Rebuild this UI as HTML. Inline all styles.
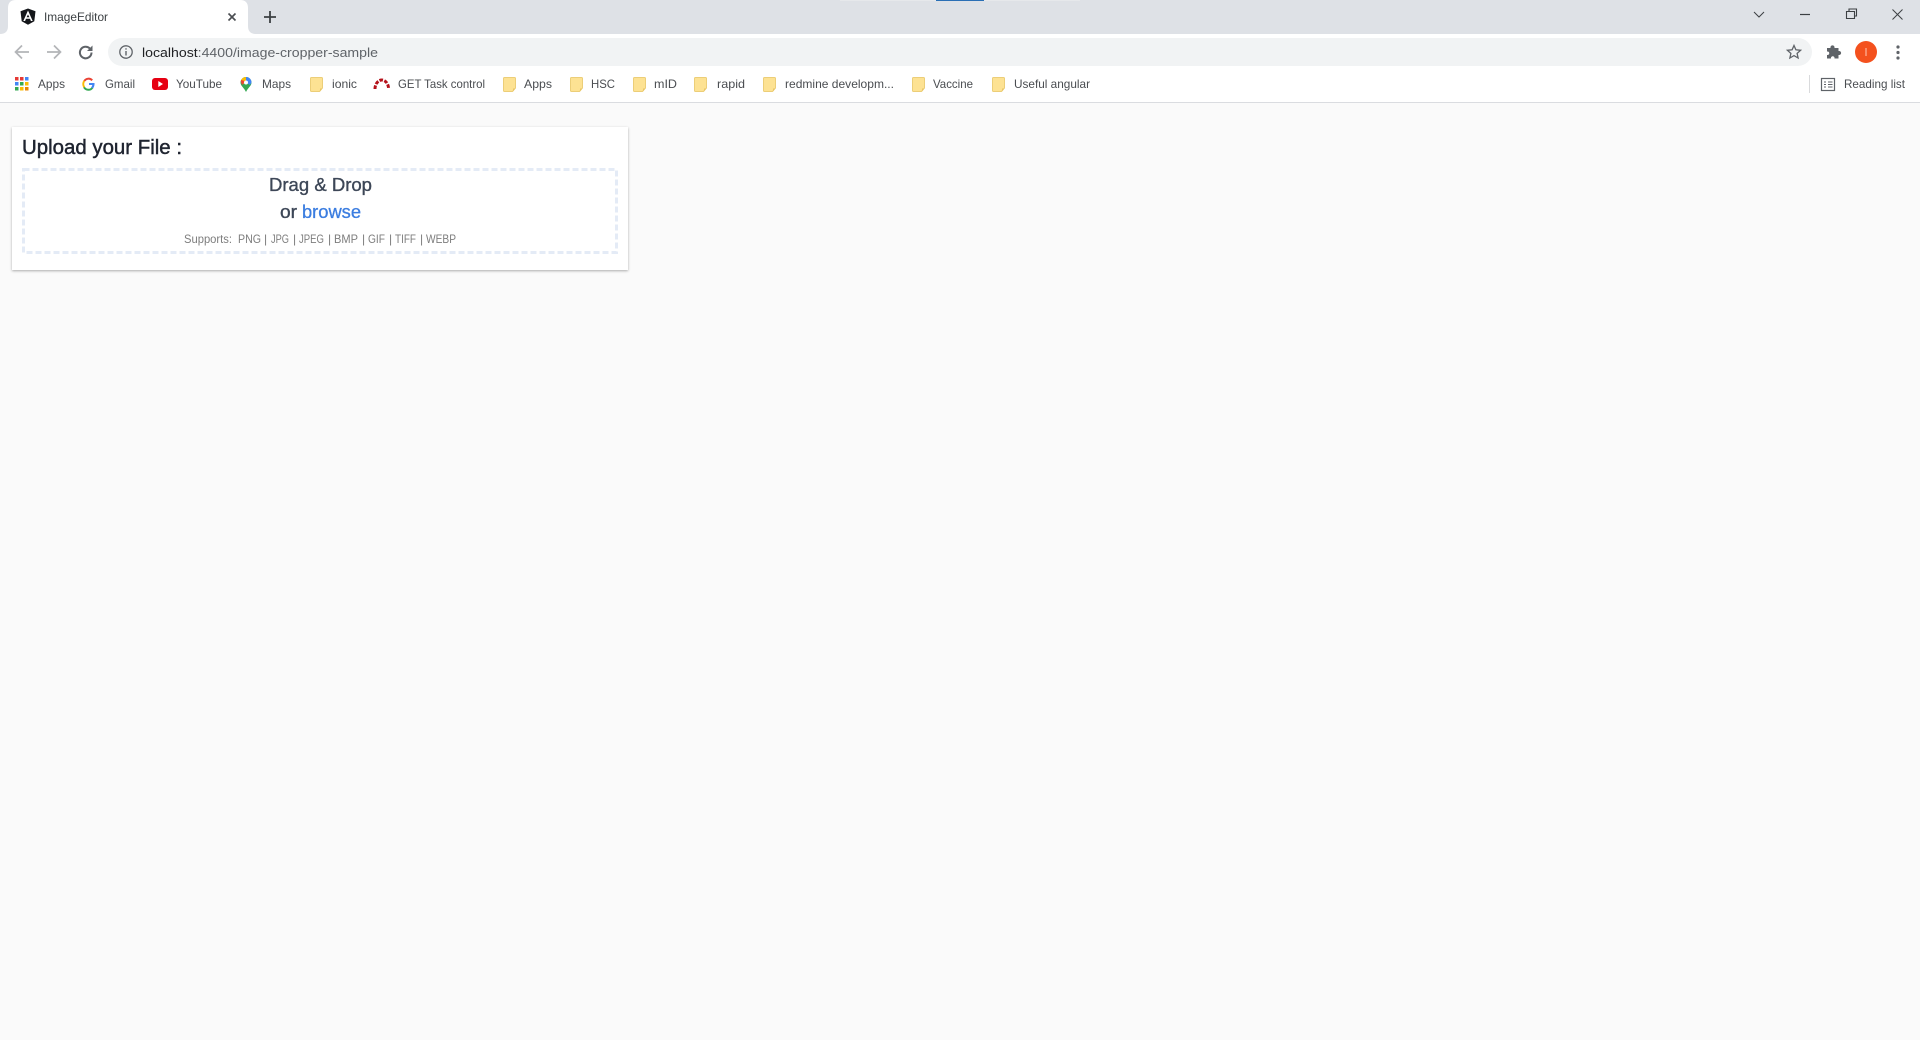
<!DOCTYPE html>
<html lang="en">
<head>
<meta charset="utf-8">
<title>ImageEditor</title>
<style>
html,body{margin:0;padding:0;background:#fafafa;width:1920px;height:1040px;overflow:hidden}
svg{display:block}
text{font-family:"Liberation Sans",sans-serif}
</style>
</head>
<body>
<svg xmlns="http://www.w3.org/2000/svg" width="1920" height="1040" viewBox="0 0 1920 1040">
<defs>
<filter id="sh" x="-5%" y="-10%" width="110%" height="125%">
<feDropShadow dx="0" dy="1" stdDeviation="1.4" flood-color="#000" flood-opacity=".32"/>
</filter>
<g id="folder">
<path d="M.5 1.500Q.5.5 1.500.5H11.500Q12.500.5 12.500 1.500V11L9.500 14.500H1.500Q.5 14.500 .5 13.500Z" fill="#fde293" stroke="#ecce78" stroke-width="1"/>
<path d="M12.500 11.500L10 14.500V11.500Z" fill="#e9c767"/>
</g>
</defs>

<!-- page -->
<rect width="1920" height="1040" fill="#fafafa"/>

<!-- tab strip -->
<rect width="1920" height="34" fill="#dee1e6"/>
<rect x="840" y="0" width="240" height="1" fill="#e6e8eb"/>
<rect x="936" y="0" width="48" height="1" fill="#2a6fb5"/>
<path d="M0 34Q8 34 8 26V8Q8 0 16 0H240Q248 0 248 8V26Q248 34 256 34Z" fill="#fff"/>

<!-- Angular favicon -->
<path d="M28 8.500L20.500 11.200 21.700 21.200 28 24.700 34.300 21.200 35.500 11.200Z" fill="#14161a"/>
<path d="M28 10.500L23.300 21H25.100L26 18.700H30L30.900 21H32.700ZM28 14.500L29.400 17.300H26.600Z" fill="#fff"/>
<text x="44" y="21" font-size="12" fill="#3c4043" textLength="64" lengthAdjust="spacingAndGlyphs">ImageEditor</text>
<path d="M228.500 13.500L235.500 20.500M235.500 13.500L228.500 20.500" stroke="#4a4d51" stroke-width="1.600" fill="none"/>
<path d="M270 11V23M264 17H276" stroke="#3c4043" stroke-width="1.800" fill="none"/>

<!-- window controls -->
<path d="M1754 12L1759 17L1764 12" stroke="#3c4043" stroke-width="1" fill="none"/>
<path d="M1800 14.500H1810" stroke="#3c4043" stroke-width="1.200"/>
<path d="M1846.500 11.500H1854.500V18.500H1846.500ZM1849 11V9H1856.500V16H1855" stroke="#3c4043" stroke-width="1.100" fill="none"/>
<path d="M1892.500 9.500L1902.500 19.500M1902.500 9.500L1892.500 19.500" stroke="#3c4043" stroke-width="1" fill="none"/>

<!-- toolbar -->
<rect x="0" y="34" width="1920" height="68" fill="#fff"/>
<path d="M29 52H16M22 45.500L15.500 52L22 58.500" stroke="#b3b5b8" stroke-width="1.700" fill="none"/>
<path d="M47 52H60.500M54 45.500L60.500 52L54 58.500" stroke="#b3b5b8" stroke-width="1.700" fill="none"/>
<path d="M91.500 52.500A5.800 5.800 0 1 1 89.800 48.400" stroke="#5f6368" stroke-width="2" fill="none"/>
<path d="M92.500 45.500V51H87Z" fill="#5f6368"/>

<rect x="108" y="38" width="1704" height="28" rx="14" fill="#f1f3f4"/>
<circle cx="126" cy="52" r="6.200" fill="none" stroke="#5f6368" stroke-width="1.300"/>
<path d="M126 51V55.500M126 48.200V49.600" stroke="#5f6368" stroke-width="1.400"/>
<text x="142" y="57" font-size="13" fill="#5f6368" textLength="236" lengthAdjust="spacingAndGlyphs"><tspan fill="#202124">localhost</tspan>:4400/image-cropper-sample</text>

<path d="M1794 45.500L1795.900 49.800 1800.600 50.300 1797.100 53.400 1798.100 58 1794 55.600 1789.900 58 1790.900 53.400 1787.400 50.300 1792.100 49.800Z" fill="none" stroke="#5f6368" stroke-width="1.300"/>
<path d="M1827 48H1830.500C1830 44.500 1835 44.500 1834.500 48H1838.500V51C1842 50.500 1842 55.500 1838.500 55V58.500H1834.500C1835 55.500 1830.500 55.500 1831 58.500H1827V55C1830 55.500 1830 51 1827 51.500Z" fill="#5f6368"/>
<circle cx="1866" cy="52" r="11" fill="#f4511e"/>
<path d="M1866 48V56" stroke="#ffc9b5" stroke-width="1"/>
<g fill="#5f6368"><circle cx="1898" cy="47" r="1.600"/><circle cx="1898" cy="52.500" r="1.600"/><circle cx="1898" cy="58" r="1.600"/></g>

<!-- bookmarks -->
<rect x="15" y="77" width="3.500" height="3.500" fill="#e53935"/>
<rect x="20" y="77" width="3.500" height="3.500" fill="#e53935"/>
<rect x="25" y="77" width="3.500" height="3.500" fill="#4285f4"/>
<rect x="15" y="82" width="3.500" height="3.500" fill="#4285f4"/>
<rect x="20" y="82" width="3.500" height="3.500" fill="#34a853"/>
<rect x="25" y="82" width="3.500" height="3.500" fill="#fbbc04"/>
<rect x="15" y="87" width="3.500" height="3.500" fill="#34a853"/>
<rect x="20" y="87" width="3.500" height="3.500" fill="#fbbc04"/>
<rect x="25" y="87" width="3.500" height="3.500" fill="#ea8600"/>
<g font-size="12" fill="#4a4d51">
<text x="38" y="88" textLength="27" lengthAdjust="spacingAndGlyphs">Apps</text>
<text x="105" y="88" textLength="30" lengthAdjust="spacingAndGlyphs">Gmail</text>
<text x="176" y="88" textLength="46" lengthAdjust="spacingAndGlyphs">YouTube</text>
<text x="262" y="88" textLength="29" lengthAdjust="spacingAndGlyphs">Maps</text>
<text x="332" y="88" textLength="25" lengthAdjust="spacingAndGlyphs">ionic</text>
<text x="398" y="88" textLength="87" lengthAdjust="spacingAndGlyphs">GET Task control</text>
<text x="524" y="88" textLength="28" lengthAdjust="spacingAndGlyphs">Apps</text>
<text x="591" y="88" textLength="24" lengthAdjust="spacingAndGlyphs">HSC</text>
<text x="654" y="88" textLength="23" lengthAdjust="spacingAndGlyphs">mID</text>
<text x="717" y="88" textLength="28" lengthAdjust="spacingAndGlyphs">rapid</text>
<text x="785" y="88" textLength="109" lengthAdjust="spacingAndGlyphs">redmine developm...</text>
<text x="933" y="88" textLength="40" lengthAdjust="spacingAndGlyphs">Vaccine</text>
<text x="1014" y="88" textLength="76" lengthAdjust="spacingAndGlyphs">Useful angular</text>
<text x="1844" y="88" textLength="61" lengthAdjust="spacingAndGlyphs">Reading list</text>
</g>

<!-- Google G -->
<path d="M84 87.200A5 5 0 0 0 92.600 87.500" fill="none" stroke="#34a853" stroke-width="2"/>
<path d="M84.300 81A5 5 0 0 1 92.200 80.300" fill="none" stroke="#ea4335" stroke-width="2"/>
<path d="M84.300 80.800A5.500 5.500 0 0 0 84.300 87.200" fill="none" stroke="#fbbc04" stroke-width="2"/>
<path d="M89 83H94.500V84.800C94.300 86.300 93.700 87.600 92.800 88.500L91.200 87.200Q92.100 86.400 92.300 85H89Z" fill="#4285f4"/>

<!-- YouTube -->
<rect x="152" y="78" width="16" height="12" rx="3" fill="#e60012"/>
<path d="M158.300 81V87L163 84Z" fill="#fff"/>

<!-- Maps -->
<path d="M246 77A5.500 5.500 0 0 0 240.500 82.500C240.500 86 244 87.500 246 92C248 87.500 251.500 86 251.500 82.500A5.500 5.500 0 0 0 246 77Z" fill="#34a853"/>
<path d="M246 77A5.500 5.500 0 0 1 251.500 82.500L250 85L246 82.500Z" fill="#4285f4"/>
<path d="M241 80.500A5.500 5.500 0 0 1 246 77V80.500L243.500 84Z" fill="#fbbc04"/>
<path d="M241 80L245 81L242.500 85Q240.500 83 241 80Z" fill="#ea4335"/>
<circle cx="246" cy="82.500" r="2" fill="#fff"/>

<!-- folders -->
<use href="#folder" x="310" y="77"/>
<use href="#folder" x="503" y="77"/>
<use href="#folder" x="570" y="77"/>
<use href="#folder" x="633" y="77"/>
<use href="#folder" x="694" y="77"/>
<use href="#folder" x="763" y="77"/>
<use href="#folder" x="912" y="77"/>
<use href="#folder" x="992" y="77"/>

<!-- Redmine -->
<path d="M375 89A6.800 9 0 0 1 388.600 89" stroke="#b5121b" stroke-width="3" fill="none" stroke-dasharray="3.600 1.400"/>

<!-- reading list -->
<path d="M1809.500 75V93" stroke="#d9dadc" stroke-width="1"/>
<rect x="1821.500" y="78.500" width="13" height="12" fill="none" stroke="#5f6368" stroke-width="1.200"/>
<path d="M1824 82H1826M1828 82H1832.500M1824 84.500H1826M1828 84.500H1832.500M1824 87H1826M1828 87H1832.500" stroke="#5f6368" stroke-width="1.100"/>

<rect x="0" y="102" width="1920" height="1" fill="#dadce0"/>

<!-- card -->
<rect x="12" y="127" width="616" height="143" fill="#fff" filter="url(#sh)"/>
<text x="22" y="154" font-size="20" fill="#1f2430" stroke="#1f2430" stroke-width=".45" textLength="160" lengthAdjust="spacingAndGlyphs">Upload your File :</text>
<rect x="23.500" y="169.500" width="593" height="83" fill="none" stroke="#e4ebf6" stroke-width="3" stroke-dasharray="6 3"/>
<text x="269" y="191" font-size="18" fill="#3d4757" stroke="#3d4757" stroke-width=".35" textLength="103" lengthAdjust="spacingAndGlyphs">Drag &amp; Drop</text>
<text x="280" y="218" font-size="18" fill="#3d4757" stroke="#3d4757" stroke-width=".35" textLength="17" lengthAdjust="spacingAndGlyphs">or</text>
<text x="302" y="218" font-size="18" fill="#3b7de0" stroke="#3b7de0" stroke-width=".3" textLength="59" lengthAdjust="spacingAndGlyphs">browse</text>
<g font-size="12" fill="#7d7d7d">
<text x="184" y="243" textLength="48" lengthAdjust="spacingAndGlyphs">Supports:</text>
<text x="238" y="243" textLength="23" lengthAdjust="spacingAndGlyphs">PNG</text>
<text x="264" y="243">|</text>
<text x="271" y="243" textLength="18" lengthAdjust="spacingAndGlyphs">JPG</text>
<text x="293" y="243">|</text>
<text x="299" y="243" textLength="25" lengthAdjust="spacingAndGlyphs">JPEG</text>
<text x="328" y="243">|</text>
<text x="334" y="243" textLength="24" lengthAdjust="spacingAndGlyphs">BMP</text>
<text x="362" y="243">|</text>
<text x="368" y="243" textLength="17" lengthAdjust="spacingAndGlyphs">GIF</text>
<text x="389" y="243">|</text>
<text x="395" y="243" textLength="21" lengthAdjust="spacingAndGlyphs">TIFF</text>
<text x="420" y="243">|</text>
<text x="426" y="243" textLength="30" lengthAdjust="spacingAndGlyphs">WEBP</text>
</g>
</svg>
</body>
</html>
